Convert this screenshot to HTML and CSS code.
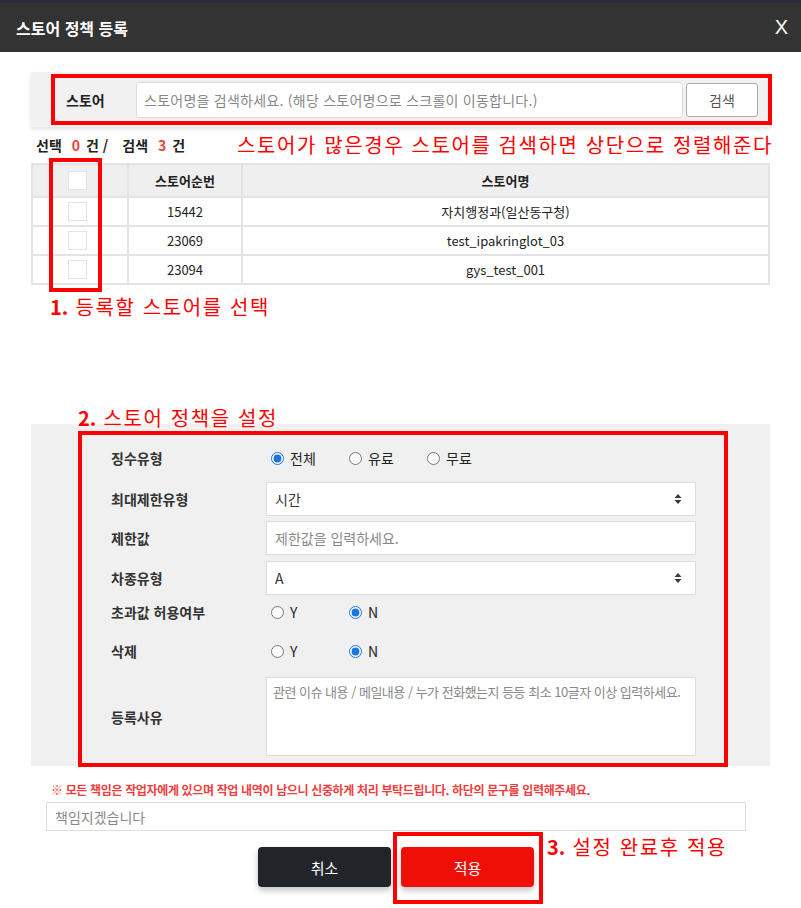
FILE: index.html
```html
<!DOCTYPE html>
<html lang="ko">
<head>
<meta charset="utf-8">
<title>스토어 정책 등록</title>
<link rel="stylesheet" href="styles.css">
</head>
<body>
<div class="modal">
  <header class="modal-header">
    <h1 class="modal-title">스토어 정책 등록</h1>
    <span class="modal-close">X</span>
  </header>

  <div class="modal-body">
    <div class="search-panel">
      <span class="search-label">스토어</span>
      <input class="search-input" type="text" placeholder="스토어명을 검색하세요. (해당 스토어명으로 스크롤이 이동합니다.)">
      <button class="search-btn" type="button">검색</button>
    </div>

    <div class="count-row">
      <div class="count">
        <span>선택</span><span class="num">0</span><span>건 /</span>
        <span class="gap">검색</span><span class="num">3</span><span>건</span>
      </div>
      <div class="note note-search">스토어가 많은경우 스토어를 검색하면 상단으로 정렬해준다</div>
    </div>

    <table class="store-table">
      <thead>
        <tr><th class="c-check"><span class="cbox"></span></th><th class="c-no">스토어순번</th><th>스토어명</th></tr>
      </thead>
      <tbody>
        <tr><td class="c-check"><span class="cbox"></span></td><td>15442</td><td>자치행정과(일산동구청)</td></tr>
        <tr><td class="c-check"><span class="cbox"></span></td><td>23069</td><td>test_ipakringlot_03</td></tr>
        <tr><td class="c-check"><span class="cbox"></span></td><td>23094</td><td>gys_test_001</td></tr>
      </tbody>
    </table>

    <div class="note note-step1"><b>1.</b> 등록할 스토어를 선택</div>
    <div class="note note-step2"><b>2.</b> 스토어 정책을 설정</div>

    <div class="form-panel">
      <div class="form-row">
        <label class="form-label">징수유형</label>
        <div class="radios">
          <label class="radio"><input type="radio" name="fee" checked> 전체</label>
          <label class="radio"><input type="radio" name="fee"> 유료</label>
          <label class="radio"><input type="radio" name="fee"> 무료</label>
        </div>
      </div>
      <div class="form-row r-select1">
        <label class="form-label">최대제한유형</label>
        <div class="select-wrap">
          <select class="control"><option>시간</option></select>
          <svg class="sel-arrow" width="8" height="12" viewBox="0 0 8 12"><path d="M4 1 L7.5 5 H0.5 Z M4 11 L7.5 7 H0.5 Z" fill="#343a40"/></svg>
        </div>
      </div>
      <div class="form-row r-input">
        <label class="form-label">제한값</label>
        <input class="control" type="text" placeholder="제한값을 입력하세요.">
      </div>
      <div class="form-row r-select2">
        <label class="form-label">차종유형</label>
        <div class="select-wrap">
          <select class="control"><option>A</option></select>
          <svg class="sel-arrow" width="8" height="12" viewBox="0 0 8 12"><path d="M4 1 L7.5 5 H0.5 Z M4 11 L7.5 7 H0.5 Z" fill="#343a40"/></svg>
        </div>
      </div>
      <div class="form-row r-radio2">
        <label class="form-label">초과값 허용여부</label>
        <div class="radios">
          <label class="radio"><input type="radio" name="over"> Y</label>
          <label class="radio"><input type="radio" name="over" checked> N</label>
        </div>
      </div>
      <div class="form-row r-radio3">
        <label class="form-label">삭제</label>
        <div class="radios">
          <label class="radio"><input type="radio" name="del"> Y</label>
          <label class="radio"><input type="radio" name="del" checked> N</label>
        </div>
      </div>
      <div class="form-row r-text">
        <label class="form-label">등록사유</label>
        <textarea class="control area" placeholder="관련 이슈 내용 / 메일내용 / 누가 전화했는지 등등 최소 10글자 이상 입력하세요."></textarea>
      </div>
    </div>

    <p class="warning">※ 모든 책임은 작업자에게 있으며 작업 내역이 남으니 신중하게 처리 부탁드립니다. 하단의 문구를 입력해주세요.</p>
    <input class="confirm-input" type="text" placeholder="책임지겠습니다">

    <div class="btn-row">
      <button class="btn btn-cancel" type="button">취소</button>
      <button class="btn btn-apply" type="button">적용</button>
      <span class="note note-step3"><b>3.</b> 설정 완료후 적용</span>
    </div>
  </div>

  <div class="mark mark-search"></div>
  <div class="mark mark-check"></div>
  <div class="mark mark-form"></div>
  <div class="mark mark-apply"></div>
</div>
</body>
</html>
```

FILE: styles.css
```css
* { box-sizing: border-box; }
html, body { margin: 0; padding: 0; background: #fff; }
body {
  font-family: "Noto Sans CJK KR", "Noto Sans", sans-serif;
  font-size: 14px;
  color: #222;
  width: 801px;
  height: 908px;
  overflow: hidden;
}
.modal { position: relative; width: 801px; height: 908px; }

.modal-header {
  height: 52px;
  border-top: 3px solid #2b2d36;
  background: #333333;
  display: flex;
  align-items: center;
  justify-content: space-between;
  padding: 0 13px 0 16px;
}
.modal-title { margin: 0; font-size: 16px; font-weight: 700; color: #fff; line-height: 1; }
.modal-close { font-family: "Liberation Sans", sans-serif; font-size: 20px; color: #fff; font-weight: 400; }

.modal-body { padding: 0 31px; }

.search-panel {
  margin-top: 20px;
  height: 55px;
  background: #f1f1f1;
  box-shadow: 0 2px 4px rgba(0,0,0,0.12);
  display: flex;
  align-items: center;
  padding-left: 35px;
}
.search-label { width: 70px; font-weight: 700; font-size: 14px; color: #222; }
.search-input {
  width: 547px; height: 36px;
  border: 1px solid #ddd; border-radius: 3px;
  background: #fff; padding: 0 7px;
  font-family: inherit; font-size: 14px; color: #333; letter-spacing: 0.25px;
}
.search-input::placeholder, .control::placeholder, .confirm-input::placeholder { color: #888; }
.search-btn {
  margin-left: 3px;
  width: 72px; height: 34px;
  background: #fff; border: 1px solid #aaa; border-radius: 3px;
  font-family: inherit; font-size: 14px; color: #555;
}

.count-row {
  margin-top: 6px;
  height: 24px;
  display: flex;
  align-items: center;
  justify-content: space-between;
  padding-left: 5px;
}
.count { font-weight: 700; font-size: 14px; color: #222; display: flex; }
.count .num { color: #f0413c; margin: 0 6px 0 10px; }
.count .gap { margin-left: 14px; }

.note { color: #ff0000; font-size: 20px; line-height: 24px; letter-spacing: 1.6px; }
.note b { font-weight: 700; letter-spacing: 0; }
.note-search { margin-right: -3px; }

.store-table {
  margin-top: 6px;
  width: 739px;
  border-collapse: collapse;
  border: 2px solid #e1e3e6;
  font-size: 13px;
  text-align: center;
  table-layout: fixed;
}
.store-table th, .store-table td { border: 2px solid #e1e3e6; padding: 0; }
.store-table th { background: #efefef; height: 33px; font-weight: 700; color: #222; }
.store-table td { height: 29px; color: #222; }
.c-check { width: 96px; }
.c-no { width: 114px; }
.cbox {
  display: block; width: 19px; height: 19px; margin: 0 0 0 35px;
  background: #fff; border: 1px solid #e3e3e3;
}

.note-step1 { margin-top: 10px; margin-left: 19px; }
.note-step2 { margin-top: 87px; margin-left: 47px; }

.form-panel {
  margin-top: -6px;
  background: #f0f0f0;
  padding: 17px 0 10px 80px;
}
.form-row { display: flex; align-items: center; height: 34px; }
.form-label { width: 155px; font-weight: 700; font-size: 14px; color: #333; }
.r-select1 { margin-top: 7px; }
.r-input { margin-top: 5px; }
.r-select2 { margin-top: 6px; }
.r-radio2 { margin-top: 5px; height: 24px; }
.r-radio3 { margin-top: 15px; height: 24px; }
.r-text { margin-top: 14px; height: 79px; }

.radios { display: flex; padding-left: 5px; }
.radio { width: 78px; display: flex; align-items: center; font-size: 14px; color: #222; }
.radio input { margin: 0 6px 0 0; width: 13px; height: 13px; accent-color: #1a73e8; }

.select-wrap { position: relative; }
.control {
  width: 430px; height: 34px;
  border: 1px solid #ddd; border-radius: 0;
  background: #fff; padding: 0 8px;
  font-family: inherit; font-size: 14px; color: #333;
  appearance: none; -webkit-appearance: none;
}
.sel-arrow { position: absolute; right: 14px; top: 11px; }
.area { height: 79px; padding: 4px 6px; resize: none; font-size: 13px; line-height: 20px; letter-spacing: -0.5px; }

.warning {
  margin: 15px 0 0 20px;
  font-size: 12px; font-weight: 700; line-height: 18px; letter-spacing: -0.35px;
  color: #f03c3c;
}
.confirm-input {
  display: block;
  margin: 3px 0 0 15px;
  width: 700px; height: 29px;
  border: 1px solid #ddd;
  padding: 0 8px;
  font-family: inherit; font-size: 14px;
}

.btn-row {
  position: relative;
  margin-top: 16px;
  display: flex;
  gap: 10px;
  padding-left: 227px;
}
.btn {
  width: 133px; height: 40px;
  border: 0; border-radius: 4px;
  font-family: inherit; font-size: 15px; color: #fff;
  box-shadow: 0 3px 6px rgba(0,0,0,0.25);
}
.btn-cancel { background: #212529; }
.btn-apply { background: #ee0f07; }
.note-step3 { position: absolute; left: 516px; top: -12px; }

.mark { position: absolute; border: 4px solid #ff0000; pointer-events: none; }
.mark-search { left: 51px; top: 74px; width: 721px; height: 51px; }
.mark-check { left: 49px; top: 158px; width: 53px; height: 134px; }
.mark-form { left: 78px; top: 431px; width: 650px; height: 336px; }
.mark-apply { left: 393px; top: 832px; width: 150px; height: 72px; }
```
